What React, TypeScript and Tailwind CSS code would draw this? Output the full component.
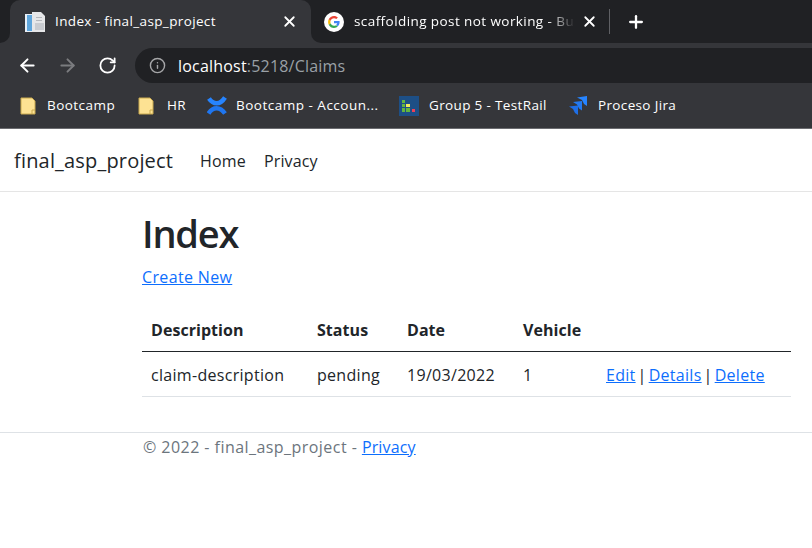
import { ArrowLeft, ArrowRight, Info, Plus, RotateCw, X } from 'lucide-react';

const chromeFont = "font-['Open_Sans',sans-serif]";

const FolderIcon = () => (
  <svg width="16" height="18" viewBox="0 0 16 18" className="shrink-0">
    <path d="M1 1h11l3 3v13H1z" fill="#fde293" stroke="#c9a94f" strokeWidth="1" />
    <path d="M12 17v-4h3" fill="none" stroke="#c9a94f" strokeWidth="1" />
  </svg>
);

const ConfluenceIcon = () => (
  <svg width="20" height="20" viewBox="0 0 20 20" className="shrink-0">
    <path d="M2 2.500C6 8.500 13 9.500 18 1.500" fill="none" stroke="#2684ff" strokeWidth="4.500" />
    <path d="M1.500 17.500C6 10.500 13 10.500 18 17.500" fill="none" stroke="#1f76f0" strokeWidth="4.500" />
  </svg>
);

const TestRailIcon = () => (
  <svg width="20" height="20" viewBox="0 0 20 20" className="shrink-0">
    <rect width="20" height="20" fill="#1d4f86" />
    <rect x="3" y="4" width="3" height="3" fill="#63b53f" />
    <rect x="3" y="8" width="3" height="3" fill="#63b53f" />
    <rect x="3" y="12" width="3" height="4" fill="#63b53f" />
    <rect x="7" y="8" width="4" height="3" fill="#f2e85c" />
    <rect x="7" y="12" width="4" height="4" fill="#63b53f" />
    <rect x="13" y="13" width="3" height="3" fill="#ee4056" />
  </svg>
);

const JiraIcon = () => (
  <svg width="20" height="20" viewBox="0 0 20 20" className="shrink-0">
    <path d="M9 1.500l10-1.500v10l-3-2-2-4z" fill="#2684ff" />
    <path d="M5 6l9-1v9.500l-3-2-2-4z" fill="#2379f0" />
    <path d="M1 10.500l9-1v9.500l-3-2-2-4z" fill="#1f6fe6" />
  </svg>
);

const TabPageIcon = () => (
  <svg width="20" height="20" viewBox="0 0 20 20" className="shrink-0">
    <rect x="0" y="2" width="12" height="18" fill="#e8f0f8" />
    <rect x="2" y="3" width="5" height="16" fill="#5fa6dc" />
    <path d="M7 0h9l4 4v16H7z" fill="#e6e7e9" />
    <rect x="10" y="11" width="9" height="7" fill="#c9ccd1" />
    <rect x="11" y="5" width="6" height="1" fill="#b5b8bd" />
    <rect x="11" y="8" width="6" height="1" fill="#b5b8bd" />
  </svg>
);

const GoogleIcon = () => (
  <svg width="20" height="20" viewBox="0 0 20 20" className="shrink-0">
    <circle cx="10" cy="10" r="10" fill="#fff" />
    <path d="M15.600 10.200c0-.5 0-.8-.1-1.200H10v2.200h3.200c-.1.7-.5 1.300-1.200 1.700l1.800 1.400c1.100-1 1.800-2.400 1.800-4.100z" fill="#4285f4" />
    <path d="M10 16c1.600 0 2.900-.5 3.800-1.400L12 13.200c-.5.3-1.200.6-2 .6-1.600 0-2.900-1-3.400-2.500l-1.900 1.400C5.700 14.700 7.700 16 10 16z" fill="#34a853" />
    <path d="M6.600 11.300c-.3-.8-.3-1.800 0-2.600L4.700 7.300c-.8 1.700-.8 3.700 0 5.400z" fill="#fbbc05" />
    <path d="M10 6.200c.9 0 1.700.3 2.300.9l1.600-1.600C12.900 4.600 11.600 4 10 4 7.700 4 5.700 5.300 4.700 7.300l1.900 1.400C7.100 7.200 8.400 6.200 10 6.200z" fill="#ea4335" />
  </svg>
);

const bookmarks = [
  { label: 'Bootcamp', icon: <FolderIcon />, width: 'w-[118px]', gap: 'gap-[11px]', tracking: 'tracking-[0.45px]' },
  { label: 'HR', icon: <FolderIcon />, width: 'w-[69px]', gap: 'gap-[13px]', tracking: 'tracking-[0.3px]' },
  { label: 'Bootcamp - Accoun...', icon: <ConfluenceIcon />, width: 'w-[192px]', gap: 'gap-[9px]', tracking: 'tracking-[0.5px]' },
  { label: 'Group 5 - TestRail', icon: <TestRailIcon />, width: 'w-[169px]', gap: 'gap-[10px]', tracking: 'tracking-[0.35px]' },
  { label: 'Proceso Jira', icon: <JiraIcon />, width: 'w-auto', gap: 'gap-[10px]', tracking: 'tracking-[0.35px]' },
];

const BrowserChrome = () => (
  <div className={`${chromeFont} text-white`}>
    {/* Tab strip */}
    <div className="flex h-[43px] items-stretch bg-[#202124] pl-[10px]">
      <div className="relative flex w-[301px] items-center rounded-t-[10px] bg-[#35363a] pl-[15px] pr-[13px]">
        {/* Flared bottom corners of the active tab */}
        <div className="absolute bottom-0 left-[-10px] size-[10px] bg-[#35363a]">
          <div className="size-full rounded-br-[10px] bg-[#202124]" />
        </div>
        <div className="absolute bottom-0 right-[-10px] size-[10px] bg-[#35363a]">
          <div className="size-full rounded-bl-[10px] bg-[#202124]" />
        </div>
        <TabPageIcon />
        <span className="ml-[10px] flex-1 truncate text-[13.5px] tracking-[0.37px]">Index - final_asp_project</span>
        <X size={17} strokeWidth={2.5} />
      </div>
      <div className="flex w-[298px] items-center pl-[13px] pr-[11px]">
        <GoogleIcon />
        <span className="ml-[10px] flex-1 overflow-hidden whitespace-nowrap text-[13.5px] tracking-[0.42px] [mask-image:linear-gradient(to_right,black_88%,transparent)]">
          scaffolding post not working - Bu
        </span>
        <X size={17} strokeWidth={2.5} className="ml-[6px]" />
      </div>
      <div className="my-[9px] w-px bg-[#5f6064]" />
      <div className="ml-[16px] flex items-center">
        <Plus size={20} strokeWidth={2.75} />
      </div>
    </div>

    {/* Address bar */}
    <div className="flex h-[40px] items-end bg-[#35363a] pl-[17px]">
      <div className="flex h-[35px] w-full items-center">
        <ArrowLeft size={21} strokeWidth={2.25} />
        <ArrowRight size={21} strokeWidth={2.25} className="ml-[19px] text-[#7b7c7f]" />
        <RotateCw size={19} strokeWidth={2.25} className="ml-[20px]" />
        <div className="ml-[18px] flex h-[35px] flex-1 items-center rounded-l-full bg-[#202124] pl-[14px]">
          <Info size={17} strokeWidth={2} className="text-[#a5a6a8]" />
          <span className="ml-[12px] text-[16px] tracking-[0.2px]">
            localhost<span className="text-[#9aa0a6]">:5218/Claims</span>
          </span>
        </div>
      </div>
    </div>

    {/* Bookmarks bar */}
    <div className="flex h-[46px] items-center border-b border-[#6b6c70] bg-[#35363a] pl-[20px]">
      {bookmarks.map((bookmark) => (
        <div key={bookmark.label} className={`flex items-center ${bookmark.width} ${bookmark.gap}`}>
          {bookmark.icon}
          <span className={`whitespace-nowrap text-[13.5px] ${bookmark.tracking}`}>{bookmark.label}</span>
        </div>
      ))}
    </div>
  </div>
);

const thClass = 'h-[41px] px-[9px] pb-[1px] text-left align-middle font-bold tracking-[0.05px]';
const tdClass = 'h-[45px] px-[9px] pt-[2px] align-middle tracking-[0.3px]';

export default function App() {
  return (
    <div className="h-[548px] overflow-hidden bg-white font-['Open_Sans',sans-serif] text-[16px] text-[#212529]">
      <BrowserChrome />

      {/* Site navbar */}
      <nav className="flex h-[63px] items-center border-b border-[#e5e5e5] pb-px pl-[14px] pt-[2px]">
        <span className="text-[20px] tracking-[0.18px]">final_asp_project</span>
        <div className="ml-[27px] flex gap-[18px] tracking-[0.15px]">
          <span>Home</span>
          <span>Privacy</span>
        </div>
      </nav>

      <main className="ml-[142px] w-[649px]">
        <h1 className="mt-[11px] text-[38px] font-semibold leading-[60px] tracking-[-1.2px]">Index</h1>
        <p className="mt-[2px] leading-[24px] tracking-[0.35px]">
          <a href="#" className="text-[#0d6efd] underline">Create New</a>
        </p>
        <table className="mt-[21px] w-full table-fixed border-collapse">
          <thead>
            <tr className="border-b border-[#212529]">
              <th className={`${thClass} w-[166px]`}>Description</th>
              <th className={`${thClass} w-[90px]`}>Status</th>
              <th className={`${thClass} w-[116px]`}>Date</th>
              <th className={`${thClass} w-[83px]`}>Vehicle</th>
              <th className={thClass} />
            </tr>
          </thead>
          <tbody>
            <tr className="border-b border-[#dee2e6]">
              <td className={tdClass}>claim-description</td>
              <td className={tdClass}>pending</td>
              <td className={tdClass}>19/03/2022</td>
              <td className={tdClass}>1</td>
              <td className={`${tdClass} [word-spacing:-2.5px]`}>
                <a href="#" className="text-[#0d6efd] underline">Edit</a> |{' '}
                <a href="#" className="text-[#0d6efd] underline">Details</a> |{' '}
                <a href="#" className="text-[#0d6efd] underline">Delete</a>
              </td>
            </tr>
          </tbody>
        </table>
      </main>

      <footer className="mt-[35px] border-t border-[#dee2e6] pl-[143px] text-[#6c757d]">
        <p className="pt-[2px] leading-[24px] tracking-[0.45px]">
          © 2022 - final_asp_project - <a href="#" className="text-[#0d6efd] underline tracking-[0.15px]">Privacy</a>
        </p>
      </footer>
    </div>
  );
}
